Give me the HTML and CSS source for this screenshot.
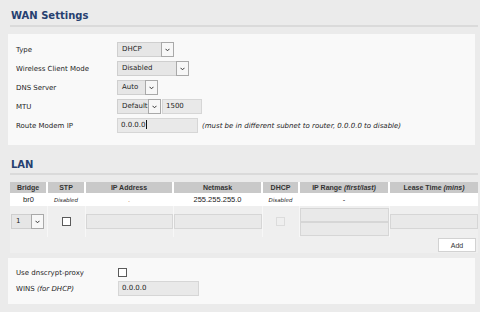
FILE: index.html
```html
<!DOCTYPE html>
<html lang="en">
  <head>
    <meta charset="UTF-8" />
    <title>WAN Settings</title>
    <link rel="stylesheet" href="styles.css">
  </head>
  <body>
    <div class="section-title">WAN Settings</div>
    <div class="panel wan">
      <div class="row">
        <label>Type</label>
        <div class="sel" style="width:57px"><span>DHCP</span><i class="arr"><svg width="5" height="4" viewBox="0 0 5 4"><path d="M0.5 0.8 L2.5 2.8 L4.5 0.8" fill="none" stroke="#333" stroke-width="1"/></svg></i></div>
      </div>
      <div class="row">
        <label>Wireless Client Mode</label>
        <div class="sel" style="width:72px"><span>Disabled</span><i class="arr"><svg width="5" height="4" viewBox="0 0 5 4"><path d="M0.5 0.8 L2.5 2.8 L4.5 0.8" fill="none" stroke="#333" stroke-width="1"/></svg></i></div>
      </div>
      <div class="row">
        <label>DNS Server</label>
        <div class="sel" style="width:41px"><span>Auto</span><i class="arr"><svg width="5" height="4" viewBox="0 0 5 4"><path d="M0.5 0.8 L2.5 2.8 L4.5 0.8" fill="none" stroke="#333" stroke-width="1"/></svg></i></div>
      </div>
      <div class="row">
        <label>MTU</label>
        <div class="sel" style="width:44px"><span>Default</span><i class="arr"><svg width="5" height="4" viewBox="0 0 5 4"><path d="M0.5 0.8 L2.5 2.8 L4.5 0.8" fill="none" stroke="#333" stroke-width="1"/></svg></i></div>
        <div class="txt mtu">1500</div>
      </div>
      <div class="row">
        <label>Route Modem IP</label>
        <div class="txt modem">0.0.0.0<b class="caret"></b></div>
        <span class="note">(must be in different subnet to router, 0.0.0.0 to disable)</span>
      </div>
    </div>

    <div class="section-title lan-title">LAN</div>
    <table class="lan">
      <colgroup>
        <col style="width:37px"><col style="width:38px"><col style="width:88px"><col style="width:89px">
        <col style="width:37px"><col style="width:90px"><col>
      </colgroup>
      <tr class="head">
        <th>Bridge</th>
        <th>STP</th>
        <th>IP Address</th>
        <th>Netmask</th>
        <th>DHCP</th>
        <th>IP Range <i>(first/last)</i></th>
        <th>Lease Time <i>(mins)</i></th>
      </tr>
      <tr class="data">
        <td>br0</td>
        <td><i class="small">Disabled</i></td>
        <td><span class="dot">.</span></td>
        <td>255.255.255.0</td>
        <td><i class="small">Disabled</i></td>
        <td>-</td>
        <td></td>
      </tr>
      <tr class="edit">
        <td><div class="sel bridge"><span>1</span><i class="arr"><svg width="5" height="4" viewBox="0 0 5 4"><path d="M0.5 0.8 L2.5 2.8 L4.5 0.8" fill="none" stroke="#333" stroke-width="1"/></svg></i></div></td>
        <td><span class="check"></span></td>
        <td><div class="txt full"></div></td>
        <td><div class="txt full"></div></td>
        <td><span class="check off"></span></td>
        <td class="range"><div class="txt full half"></div><div class="txt full half"></div></td>
        <td><div class="txt full"></div></td>
      </tr>
    </table>
    <div class="add-row"><button class="add">Add</button></div>

    <div class="panel dns">
      <div class="row">
        <label>Use dnscrypt-proxy</label>
        <span class="check box"></span>
      </div>
      <div class="row">
        <label>WINS <i>(for DHCP)</i></label>
        <div class="txt wins">0.0.0.0</div>
      </div>
    </div>
  </body>
</html>
```

FILE: styles.css
```css
body {
  margin: 0;
  background: #ebebeb;
  font-family: "DejaVu Sans", Tahoma, sans-serif;
  font-size: 7px;
  color: #1e1e1e;
}
.section-title {
  margin: 10px 2px 0 10px;
  padding: 0 0 3px 1px;
  border-bottom: 2px solid #dadada;
  font-size: 10px;
  font-weight: bold;
  line-height: 12px;
  color: #263f70;
}
.lan-title {
  margin-top: 14px;
  padding-bottom: 2px;
}
.panel {
  margin-left: 8px;
  width: 467px;
  box-sizing: border-box;
  background: #f9f9f9;
  display: flex;
  flex-direction: column;
}
.wan {
  margin-top: 7px;
  padding: 8px 0 12px 8px;
  gap: 4px;
}
.dns {
  padding: 7px 0 8px 8px;
  gap: 1px;
}
.row {
  display: flex;
  align-items: center;
  height: 15px;
}
.row label {
  width: 101px;
  flex: none;
}
.sel {
  display: flex;
  height: 15px;
  box-sizing: border-box;
  border: 1px solid #cfcfcf;
  background: #e6e6e6;
  text-align: left;
}
.sel span {
  flex: 1;
  padding-left: 4px;
  line-height: 13px;
}
.sel .arr {
  width: 11px;
  margin: -1px -1px -1px 0;
  border: 1px solid #a9a9a9;
  background: #f7f7f7;
  display: flex;
  align-items: center;
  justify-content: center;
}
.txt {
  height: 15px;
  box-sizing: border-box;
  border: 1px solid #d6d6d6;
  background: #e9e9e9;
  padding-left: 3px;
  line-height: 13px;
}
.mtu {
  width: 40px;
  margin-left: 1px;
}
.modem {
  width: 81px;
}
.caret {
  display: inline-block;
  width: 1px;
  height: 9px;
  background: #111;
  vertical-align: -2px;
}
.note {
  font-style: italic;
  margin-left: 4px;
}
.wins {
  width: 81px;
  margin-left: 1px;
}

/* LAN table */
.lan {
  margin: 7px 2px 0 10px;
  width: 468px;
  table-layout: fixed;
  border-collapse: collapse;
  font-family: "Liberation Sans", Arial, sans-serif;
  font-size: 7px;
  color: #222;
}
.lan th,
.lan td {
  padding: 0;
  text-align: center;
}
.lan th {
  height: 11px;
  background: #c9c9c9;
  border-left: 2px solid #fff;
  font-weight: bold;
  color: #333;
}
.lan th:first-child {
  border-left: none;
}
.data td {
  height: 13px;
  background: #fff;
  font-size: 7.5px;
}
.small {
  font-family: "DejaVu Sans", sans-serif;
  font-size: 5.5px;
}
.dot {
  color: #c98a4a;
}
.edit td {
  height: 31px;
  background: #efefef;
  border-left: 1px solid #f7f7f7;
  vertical-align: middle;
}
.edit td:first-child {
  border-left: none;
}
.sel.bridge {
  width: 33px;
  margin-left: 1px;
  font-family: "DejaVu Sans", sans-serif;
}
.full {
  width: 100%;
  padding: 0;
}
.half {
  height: 14px;
}
.range {
  padding-top: 1px;
}
.check {
  display: inline-block;
  width: 9px;
  height: 9px;
  box-sizing: border-box;
  border: 1px solid #5a5a5a;
  background: #fff;
  vertical-align: middle;
}
.check.off {
  border-color: #dcdcdc;
  background: #efefef;
}
.add-row {
  margin: 0 2px 5px 10px;
  height: 16px;
  background: #efefef;
  display: flex;
  justify-content: flex-end;
  align-items: flex-start;
}
.add {
  margin: 1px 2px 0 0;
  width: 38px;
  height: 14px;
  padding: 0;
  border: 1px solid #d2d2d2;
  background: #fff;
  font-family: "Liberation Sans", Arial, sans-serif;
  font-size: 7px;
  color: #333;
}
.check.box {
  margin-left: 1px;
}
```
